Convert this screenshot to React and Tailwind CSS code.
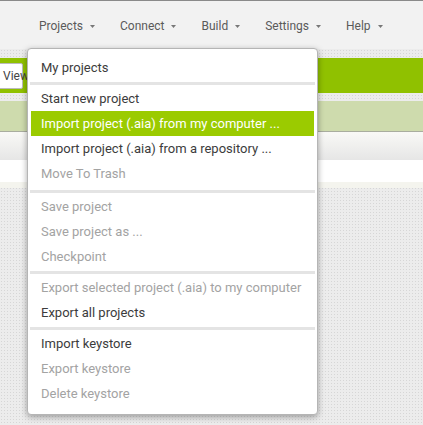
const navItems = ['Projects', 'Connect', 'Build', 'Settings', 'Help']

const menu = [
  { label: 'My projects' },
  { sep: true },
  { label: 'Start new project' },
  { label: 'Import project (.aia) from my computer ...', active: true },
  { label: 'Import project (.aia) from a repository ...' },
  { label: 'Move To Trash', disabled: true },
  { sep: true, wide: true },
  { label: 'Save project', disabled: true },
  { label: 'Save project as ...', disabled: true },
  { label: 'Checkpoint', disabled: true },
  { sep: true },
  { label: 'Export selected project (.aia) to my computer', disabled: true },
  { label: 'Export all projects' },
  { sep: true },
  { label: 'Import keystore' },
  { label: 'Export keystore', disabled: true },
  { label: 'Delete keystore', disabled: true },
]

function Caret() {
  return (
    <svg width="5" height="3" viewBox="0 0 5 3" className="ml-[7px] mt-[1px]">
      <path d="M0 0h5L2.5 3z" fill="#777" />
    </svg>
  )
}

const dots = 'bg-[#ececec] bg-[radial-gradient(#d6d6d6_0.8px,transparent_0.9px)] bg-[length:3px_3px]'

export default function App() {
  return (
    <div className="relative h-[425px] w-[423px] overflow-hidden font-['Roboto',sans-serif]">
      <div className="h-[49px] border-t border-[#8a8a8a] bg-[#f2f2f2] flex items-center pl-[26.5px] pt-[2px]">
        {navItems.map((n) => (
          <div key={n} className="flex items-center px-[12.5px] text-[12px] text-[#5a5a5a]">
            {n}
            <Caret />
          </div>
        ))}
      </div>

      <div className={'h-[376px] ' + dots}>
        <div className="h-[9px]" />
        <div className="h-[35px] bg-[#90c100] flex items-center">
          <div className="h-[26px] w-[27px] bg-white border border-[#bbb] rounded-r-[2px] flex items-center text-[12px] text-[#444] -ml-[4px] pl-[6px]">View</div>
        </div>
        <div className="h-[8px]" />
        <div className="h-[31px] bg-[#cedbad] border-b border-[#a9ad9f]" />
        <div className="h-[28px] bg-gradient-to-b from-[#f9f9f6] to-[#e6e6e6]" />
        <div className="h-[22px] bg-white" />
        <div className="h-[6px] bg-[#f4f4ee]" />
      </div>

      <div className="absolute left-[27px] top-[48px] w-[291px] bg-white border border-[#b5b5b5] rounded-[4px] shadow-[0_2px_6px_rgba(0,0,0,0.35)] pt-[6px] pb-[7px] px-[3px]">
        {menu.map((m, i) =>
          m.sep ? (
            <div
              key={i}
              className={'h-[3px] bg-[#e4e4e4] -mx-[1px] ' + (m.wide ? 'mt-[3.5px] mb-[2px]' : 'my-[1.5px]')}
            />
          ) : (
            <div
              key={i}
              className={
                'h-[25px] flex items-center pl-[10px] text-[13px] whitespace-nowrap ' +
                (m.active ? 'bg-[#9bcb00] text-white' : m.disabled ? 'text-[#a3a3a3]' : 'text-[#3c3c3c]')
              }
            >
              {m.label}
            </div>
          )
        )}
      </div>
    </div>
  )
}
